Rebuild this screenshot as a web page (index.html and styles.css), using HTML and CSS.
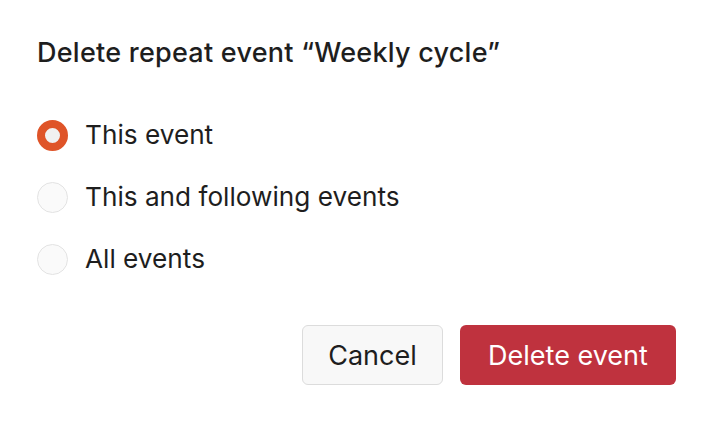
FILE: index.html
```html
<!DOCTYPE html>
<html>
<head>
<meta charset="utf-8">
<link rel="stylesheet" href="styles.css">
</head>
<body>
<div class="dialog">
  <h1 class="title">Delete repeat event “Weekly cycle”</h1>
  <div class="options">
    <label class="option"><span class="radio checked"></span><span class="label">This event</span></label>
    <label class="option"><span class="radio"></span><span class="label">This and following events</span></label>
    <label class="option"><span class="radio"></span><span class="label">All events</span></label>
  </div>
  <div class="actions">
    <button class="btn btn-cancel">Cancel</button>
    <button class="btn btn-delete">Delete event</button>
  </div>
</div>
</body>
</html>
```
FILE: styles.css
```css
html, body {
  margin: 0;
  padding: 0;
  background: #ffffff;
}
body {
  font-family: Inter, "Noto Sans", sans-serif;
  color: #1e1e1e;
  width: 708px;
  height: 424px;
}
.dialog {
  padding: 35px 32px 0 37px;
  display: flex;
  flex-direction: column;
}
.title {
  margin: 0;
  font-size: 27px;
  font-weight: 500;
  line-height: 36px;
  letter-spacing: 0.25px;
}
.options {
  margin-top: 49px;
  display: flex;
  flex-direction: column;
  gap: 32px;
}
.option {
  display: flex;
  align-items: center;
  height: 30px;
}
.radio {
  box-sizing: border-box;
  width: 31px;
  height: 31px;
  border-radius: 50%;
  border: 1.5px solid #e3e3e3;
  background: #fafafa;
  flex: none;
}
.radio.checked {
  border: 8px solid #df5428;
  background: #f1f1f1;
}
.label {
  margin-left: 17px;
  font-size: 26.2px;
  line-height: 30px;
}
.actions {
  margin-top: 51px;
  display: flex;
  justify-content: flex-end;
  gap: 17px;
}
.btn {
  font-family: Inter, "Noto Sans", sans-serif;
  font-size: 27px;
  height: 60px;
  border-radius: 6px;
  padding: 0;
}
.btn-cancel {
  width: 141px;
  background: #f8f8f8;
  border: 1.5px solid #dcdcdc;
  color: #1e1e1e;
}
.btn-delete {
  width: 216px;
  background: #bf323e;
  border: none;
  color: #ffffff;
}
```
